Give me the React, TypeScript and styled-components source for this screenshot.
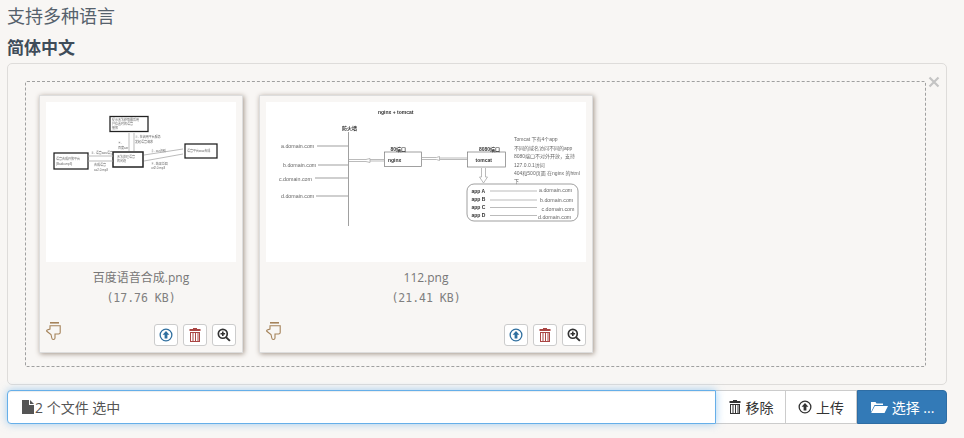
import React from 'react'
import styled, { createGlobalStyle } from 'styled-components'

const Global = createGlobalStyle`
  html, body {
    margin: 0;
    padding: 0;
    background: #f8f6f4;
    color: #333;
    font-family: "Open Sans", "Liberation Sans", "Noto Sans CJK SC", sans-serif;
    font-size: 14px;
  }
  * { box-sizing: border-box; }
`

const Page = styled.div`
  width: 964px;
  height: 438px;
  padding: 0 17px 0 7px;
  overflow: hidden;
`

const Title = styled.h3`
  margin: 0;
  height: 32px;
  font-size: 18px;
  line-height: 32px;
  font-weight: 400;
  color: #56616c;
`

const SubTitle = styled.h4`
  margin: 0;
  height: 31px;
  font-size: 17px;
  line-height: 32px;
  font-weight: 700;
  color: #3f4c59;
`

const Preview = styled.div`
  position: relative;
  height: 322px;
  padding: 17px 20px 17px 17px;
  border: 1px solid #dedcda;
  border-radius: 5px;
`

const Close = styled.span`
  position: absolute;
  top: 12px;
  right: 6px;
  line-height: 0;
  color: #c4c4c4;
`

const Drop = styled.div`
  display: flex;
  align-items: flex-start;
  gap: 16px;
  height: 286px;
  padding: 13px;
  border: 1px dashed #a0a0a0;
  border-radius: 2px;
`

const Card = styled.div`
  width: ${p => p.$w}px;
  height: 258px;
  padding: 6px;
  background: #f8f6f4;
  border: 1px solid #ddd;
  box-shadow: 1px 1px 5px 0 #a2958a;
  display: flex;
  flex-direction: column;
`

const Thumb = styled.div`
  height: 160px;
  background: #fff;
  line-height: 0;
`

const Caption = styled.div`
  margin-top: 7px;
  font-size: 12px;
  line-height: 18px;
  text-align: center;
  color: #777;
`

const Size = styled.div`
  margin-top: 2px;
  font-family: "DejaVu Sans Mono", "Liberation Mono", monospace;
  font-size: 11.5px;
  line-height: 18px;
  text-align: center;
  color: #808080;
`

const CardFoot = styled.div`
  margin-top: auto;
  height: 25px;
  display: flex;
  align-items: flex-end;
  justify-content: space-between;
`

const Hand = styled.span`
  line-height: 0;
  margin-bottom: 5px;
  color: #a5835a;
`

const Actions = styled.div`
  display: flex;
  gap: 5px;
`

const ActionBtn = styled.button`
  width: 24px;
  height: 22px;
  padding: 0;
  display: flex;
  align-items: center;
  justify-content: center;
  background: #fff;
  border: 1px solid #ccc;
  border-radius: 3px;
  color: ${p => p.$color};
`

const InputGroup = styled.div`
  margin-top: 5px;
  height: 34px;
  display: flex;
`

const Field = styled.div`
  flex: 1;
  display: flex;
  align-items: center;
  gap: 1px;
  padding-left: 14px;
  background: #fff;
  border: 1px solid #66afe9;
  border-radius: 4px 0 0 4px;
  box-shadow: inset 0 1px 1px rgba(0, 0, 0, .075), 0 0 8px rgba(102, 175, 233, .6);
  font-size: 14px;
  color: #555;
  position: relative;
`

const GroupBtn = styled.button`
  width: ${p => p.$w}px;
  display: flex;
  align-items: center;
  justify-content: center;
  gap: 4px;
  padding: 0;
  font: inherit;
  color: ${p => (p.$primary ? '#fff' : '#333')};
  background: ${p => (p.$primary ? '#337ab7' : '#fff')};
  border: 1px solid ${p => (p.$primary ? '#2e6da4' : '#ccc')};
  border-left-width: ${p => (p.$primary ? 1 : 0)}px;
  border-radius: ${p => (p.$primary ? '0 4px 4px 0' : '0')};
`

const Icon = ({ size = 14, children }: { size?: number; children: React.ReactNode }) => (
  <svg width={size} height={size} viewBox="0 0 14 14" fill="currentColor">{children}</svg>
)

const UploadIcon = ({ size }: { size?: number }) => (
  <Icon size={size}>
    <path fillRule="evenodd" d="M7 .5a6.500 6.500 0 1 0 0 13 6.500 6.500 0 0 0 0-13zm0 1.300a5.200 5.200 0 1 1 0 10.400 5.200 5.200 0 0 1 0-10.400z" />
    <path d="M7 3 10.400 6.800H8.400V10.600H5.600V6.800H3.600z" />
  </Icon>
)

const TrashIcon = ({ size }: { size?: number }) => (
  <Icon size={size}>
    <path d="M5 0h4v1h3.500v2h-11V1H5z" />
    <path d="M2 4h10v1H2zM2 13h10v1H2zM2 5h1v8H2zM4.500 5h1v8h-1zM7 5h1v8H7zM9.500 5h1v8h-1zM11 5h1v8h-1z" />
  </Icon>
)

const ZoomIcon = () => (
  <Icon>
    <path fillRule="evenodd" d="M5.800.5a5.300 5.300 0 1 0 0 10.600 5.300 5.300 0 0 0 0-10.600zm0 1.700a3.600 3.600 0 1 1 0 7.200 3.600 3.600 0 0 1 0-7.200z" />
    <path d="M5 3.500h1.600V5h1.500v1.600H6.600v1.500H5V6.600H3.500V5H5z" />
    <path d="M9.600 8.400 13.600 12.200 12.200 13.600 8.300 9.700z" />
  </Icon>
)

const HandDown = () => (
  <svg width="16" height="19" viewBox="0 0 16 19" fill="none" stroke="currentColor" strokeWidth="1.100">
    <path d="M4 .8h9" strokeWidth="1.600" />
    <path d="M4 3.700H14.200V10.500Q14.200 12 12.500 12H9V16Q9 17.500 7.300 17.500 6 17.500 5.800 16L5 12.500.8 9.300Q.3 8.500 1.200 8L4 7z" />
  </svg>
)

const Diagram = styled.svg`
  display: block;
  text { font-family: "Liberation Sans", "Noto Sans CJK SC", sans-serif; }
`

const BaiduDiagram = () => (
  <Diagram width="190" height="160" viewBox="0 0 190 160">
    <defs><filter id="a"><feGaussianBlur stdDeviation=".45" /></filter></defs>
    <g filter="url(#a)">
      <g fill="none" stroke="#222">
        <rect x="64" y="14.500" width="38" height="15" strokeWidth="1.300" />
        <rect x="8" y="51" width="34" height="16" strokeWidth="1.300" />
        <rect x="67" y="50" width="30" height="15" strokeWidth="1.500" />
        <rect x="139" y="42" width="32" height="14" strokeWidth="1.300" />
      </g>
      <g stroke="#aaa" strokeWidth=".8" fill="none">
        <path d="M83 31v18M88 31v18M42 54h25M42 59h25M98 53 137 47M98 59 137 52" />
      </g>
      <g fontSize="3" fill="#666">
        <text x="66" y="19">提示无法获取最后用</text>
        <text x="66" y="23">户位置时的语音</text>
        <text x="66" y="27">播放</text>
        <text x="10" y="58">语音合成开放平台</text>
        <text x="10" y="63">(Baidu.mp3)</text>
        <text x="71" y="56">无法处理语音</text>
        <text x="71" y="60">的问题</text>
        <text x="141" y="50">语音平台wav合成</text>
        <text x="89" y="36">①. 在调用平台服务</text>
        <text x="89" y="41">发起语音请求</text>
        <text x="72" y="42">④.</text>
        <text x="72" y="47">百度asr</text>
        <text x="45" y="52">②. 语音wav语音</text>
        <text x="48" y="64">合成语音</text>
        <text x="48" y="69">av2.0.mp3</text>
        <text x="105" y="50">③. asr识别</text>
        <text x="105" y="63">⑤. 结果返回</text>
        <text x="105" y="67">url2.0.mp3</text>
      </g>
    </g>
  </Diagram>
)

const NginxDiagram = () => (
  <Diagram width="320" height="160" viewBox="0 0 320 160">
    <defs><filter id="b"><feGaussianBlur stdDeviation=".35" /></filter></defs>
    <g filter="url(#b)">
      <g stroke="#777" strokeWidth=".7" fill="none">
        <path d="M82.500 30v94" />
        <path d="M51 44h31M52 63h30M49 76h33M50 94h32" />
        <rect x="118.500" y="50" width="37" height="14.500" />
        <rect x="201.500" y="50" width="38" height="15" />
        <rect x="201" y="82" width="111" height="37" rx="7" />
      </g>
      <g stroke="#aaa" strokeWidth=".8" fill="none">
        <path d="M83 57.500h17l4-1v4l-4-1H83M104 57.500h14.500M104 59h14.500" />
        <path d="M155.500 55.500h15l3-1v4l-3-1h-15M174 56h27M174 57.500h27" />
        <path d="M215.500 66v9h-2l4 6 4-6h-2v-9" />
        <path d="M224 89h47M224 98h47M224 105.500h47M224 113.500h47" />
      </g>
      <g fontSize="5.300" fill="#666">
        <text x="15" y="45.500">a.domain.com</text>
        <text x="17" y="64.500">b.domain.com</text>
        <text x="13" y="78.500">c.domain.com</text>
        <text x="15" y="96">d.domain.com</text>
        <text x="273" y="90">a.domain.com</text>
        <text x="274" y="100">b.domain.com</text>
        <text x="275.500" y="109">c.domain.com</text>
        <text x="272" y="117">d.domain.com</text>
      </g>
      <g fontSize="5" fill="#666">
        <text x="248" y="39">Tomcat 下有4个app</text>
        <text x="248" y="47.500">不同的域名访问不同的app</text>
        <text x="248" y="56">8080端口不对外开放，支持</text>
        <text x="248" y="65">127.0.0.1访问</text>
        <text x="248" y="73">404和500页面 在nginx 的html</text>
        <text x="248" y="81">下</text>
      </g>
      <g fontSize="5" fontWeight="700" fill="#333">
        <text x="112" y="12">nginx + tomcat</text>
        <text x="76" y="28">防火墙</text>
        <text x="124.500" y="48.500">80端口</text>
        <text x="213" y="48.500">8080端口</text>
        <text x="122" y="60">nginx</text>
        <text x="209.500" y="59.500">tomcat</text>
        <text x="205.500" y="91">app A</text>
        <text x="205.500" y="99">app B</text>
        <text x="205.500" y="107">app C</text>
        <text x="205.500" y="115">app D</text>
      </g>
    </g>
  </Diagram>
)

const files = [
  { name: '百度语音合成.png', size: '(17.76 KB)', w: 204, diagram: <BaiduDiagram /> },
  { name: '112.png', size: '(21.41 KB)', w: 334, diagram: <NginxDiagram /> },
]

export default function App() {
  return (
    <Page>
      <Global />
      <Title>支持多种语言</Title>
      <SubTitle>简体中文</SubTitle>
      <Preview>
        <Close>
          <svg width="12" height="12" viewBox="0 0 12 12" stroke="currentColor" strokeWidth="2.200">
            <path d="M1.500 1.500 10.500 10.500M10.500 1.500 1.500 10.500" />
          </svg>
        </Close>
        <Drop>
          {files.map(f => (
            <Card key={f.name} $w={f.w}>
              <Thumb>{f.diagram}</Thumb>
              <Caption>{f.name}</Caption>
              <Size>{f.size}</Size>
              <CardFoot>
                <Hand><HandDown /></Hand>
                <Actions>
                  <ActionBtn $color="#2f6f9f"><UploadIcon /></ActionBtn>
                  <ActionBtn $color="#a94442"><TrashIcon /></ActionBtn>
                  <ActionBtn $color="#333"><ZoomIcon /></ActionBtn>
                </Actions>
              </CardFoot>
            </Card>
          ))}
        </Drop>
      </Preview>
      <InputGroup>
        <Field>
          <svg width="12" height="14" viewBox="0 0 12 14" fill="#555">
            <path d="M0 0h7v5h5v9H0zM8 0l4 4H8z" />
          </svg>
          2 个文件 选中
        </Field>
        <GroupBtn $w={70}><TrashIcon />移除</GroupBtn>
        <GroupBtn $w={71}><UploadIcon />上传</GroupBtn>
        <GroupBtn $w={90} $primary>
          <svg width="18" height="14" viewBox="0 0 18 14" fill="#fff">
            <path d="M1 12V2h4.500l1 1.500H13V5H4.500zM4.800 6H18l-3.500 7H1.200z" />
          </svg>
          选择 ...
        </GroupBtn>
      </InputGroup>
    </Page>
  )
}
